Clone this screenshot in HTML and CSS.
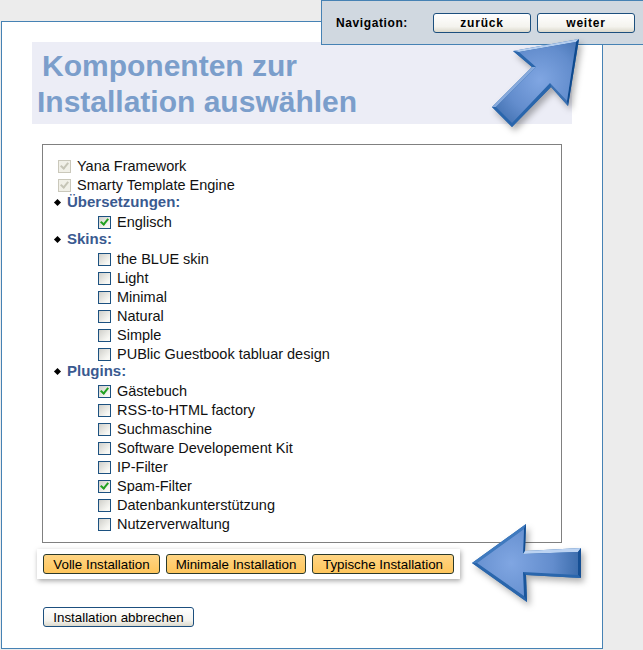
FILE: index.html
```html
<!DOCTYPE html>
<html lang="de">
<head>
<meta charset="utf-8">
<title>Komponenten zur Installation auswählen</title>
<link rel="stylesheet" href="styles.css">
</head>
<body>
<nav class="nav">
  <span class="nav-label">Navigation:</span>
  <div class="nav-buttons">
    <button class="btn btn-nav">zurück</button>
    <button class="btn btn-nav">weiter</button>
  </div>
</nav>
<main class="page">
  <h1 class="title">Komponenten zur<br><span class="title-second">Installation auswählen</span></h1>
  <section class="list">
    <label class="row"><input type="checkbox" class="check check-off" checked disabled>Yana Framework</label>
    <label class="row"><input type="checkbox" class="check check-off" checked disabled>Smarty Template Engine</label>
    <h2 class="group">Übersetzungen:</h2>
    <label class="row row-sub"><input type="checkbox" class="check" checked>Englisch</label>
    <h2 class="group">Skins:</h2>
    <label class="row row-sub"><input type="checkbox" class="check">the BLUE skin</label>
    <label class="row row-sub"><input type="checkbox" class="check">Light</label>
    <label class="row row-sub"><input type="checkbox" class="check">Minimal</label>
    <label class="row row-sub"><input type="checkbox" class="check">Natural</label>
    <label class="row row-sub"><input type="checkbox" class="check">Simple</label>
    <label class="row row-sub"><input type="checkbox" class="check">PUBlic Guestbook tabluar design</label>
    <h2 class="group">Plugins:</h2>
    <label class="row row-sub"><input type="checkbox" class="check" checked>Gästebuch</label>
    <label class="row row-sub"><input type="checkbox" class="check">RSS-to-HTML factory</label>
    <label class="row row-sub"><input type="checkbox" class="check">Suchmaschine</label>
    <label class="row row-sub"><input type="checkbox" class="check">Software Developement Kit</label>
    <label class="row row-sub"><input type="checkbox" class="check">IP-Filter</label>
    <label class="row row-sub"><input type="checkbox" class="check" checked>Spam-Filter</label>
    <label class="row row-sub"><input type="checkbox" class="check">Datenbankunterstützung</label>
    <label class="row row-sub"><input type="checkbox" class="check">Nutzerverwaltung</label>
  </section>
  <div class="presets">
    <button class="btn btn-orange btn-volle">Volle Installation</button>
    <button class="btn btn-orange btn-min">Minimale Installation</button>
    <button class="btn btn-orange btn-typ">Typische Installation</button>
  </div>
  <button class="btn btn-cancel">Installation abbrechen</button>
</main>

<svg class="arrow arrow-nav" width="110" height="105" viewBox="0 0 110 105" aria-hidden="true">
  <defs>
    <radialGradient id="faceA" gradientUnits="userSpaceOnUse" cx="60" cy="50" r="56">
      <stop offset="0" stop-color="#80a6e2"/>
      <stop offset="0.6" stop-color="#638dcd"/>
      <stop offset="1" stop-color="#4372b2"/>
    </radialGradient>
  </defs>
  <polygon points="99,9 33,21 52,37 12,77 32,97 71,57 88,76" fill="#2a66ac"/>
  <polygon points="33,21 99,9 96,12 39,22" fill="#b4cdee"/>
  <polygon points="99,9 88,76 87,71 96,12" fill="#0f4a8e"/>
  <polygon points="88,76 71,57 70,53 87,71" fill="#3a70b2"/>
  <polygon points="71,57 32,97 32,93 70,53" fill="#2a66ac"/>
  <polygon points="32,97 12,77 16,77 32,93" fill="#2a66ac"/>
  <polygon points="12,77 52,37 56,37 16,77" fill="#86a9dc"/>
  <polygon points="52,37 33,21 39,22 56,37" fill="#2a66ac"/>
  <polygon points="39,22 96,12 87,71 70,53 32,93 16,77 56,37" fill="url(#faceA)"/>
</svg>

<svg class="arrow arrow-presets" width="125" height="92" viewBox="0 0 125 92" aria-hidden="true">
  <defs>
    <radialGradient id="faceB" gradientUnits="userSpaceOnUse" cx="46" cy="45" r="70">
      <stop offset="0" stop-color="#80a6e2"/>
      <stop offset="0.6" stop-color="#638dcd"/>
      <stop offset="1" stop-color="#3a6bab"/>
    </radialGradient>
  </defs>
  <polygon points="7,45 61,6 60,33 116,30 116,60 61,57 62,84" fill="#2a66ac"/>
  <polygon points="7,45 61,6 59,11 12,45" fill="#3f7abf"/>
  <polygon points="61,6 60,33 58,36 59,11" fill="#124d92"/>
  <polygon points="60,33 116,30 113,34 58,36" fill="#bcd3f2"/>
  <polygon points="116,60 116,30 113,34 113,57" fill="#154f94"/>
  <polygon points="116,60 61,57 58,54 113,57" fill="#2a66ac"/>
  <polygon points="61,57 62,84 59,78 58,54" fill="#1a569c"/>
  <polygon points="62,84 7,45 12,45 59,78" fill="#2a66ac"/>
  <polygon points="12,45 59,11 58,36 113,34 113,57 58,54 59,78" fill="url(#faceB)"/>
</svg>
</body>
</html>
```
FILE: styles.css
```css
html, body {
  margin: 0;
  padding: 0;
  height: 650px;
  overflow: hidden;
}
body {
  background: #ececec;
  font-family: "Liberation Sans", Arial, sans-serif;
  font-size: 14.5px;
  color: #000;
  position: relative;
}
.page {
  box-sizing: border-box;
  width: 602px;
  height: 628px;
  margin: 21px 0 0 1px;
  padding: 20px 30px 0 40px;
  background: #fff;
  border: 1px solid #4682b4;
}
.title {
  box-sizing: border-box;
  width: 540px;
  height: 82px;
  margin: 0 0 20px -10px;
  padding: 6px 0 0 10px;
  background: #ecedf6;
  color: #7b9ecb;
  font-size: 30px;
  font-weight: bold;
  line-height: 36px;
}
.title-second {
  margin-left: -5px;
}
.list {
  box-sizing: border-box;
  width: 520px;
  height: 399px;
  padding: 12px 0 0 15px;
  border: 1px solid #808080;
}
.row {
  display: flex;
  align-items: center;
  height: 19px;
  line-height: 19px;
  color: #111;
}
.row-sub {
  padding-left: 40px;
}
.group {
  position: relative;
  height: 18px;
  margin: 0;
  padding-left: 9px;
  color: #3a5a90;
  font-size: 15px;
  font-weight: bold;
  line-height: 13px;
}
.group::before {
  content: "";
  position: absolute;
  left: -3px;
  top: 5px;
  width: 5px;
  height: 5px;
  background: #000;
  transform: rotate(45deg);
}
.check {
  appearance: none;
  -webkit-appearance: none;
  position: relative;
  flex: none;
  box-sizing: border-box;
  width: 13px;
  height: 13px;
  margin: 0 6px 0 0;
  background: linear-gradient(135deg, #cfcfca, #f8f8f4 80%);
  border: 1px solid #1c5180;
}
.check:checked::after {
  content: "";
  position: absolute;
  left: 3px;
  top: 0;
  width: 3px;
  height: 6px;
  border: solid #21a121;
  border-width: 0 2px 2px 0;
  transform: rotate(40deg);
}
.check-off {
  background: #f1f0e8;
  border-color: #cac8bb;
}
.check-off:checked::after {
  border-color: #c6c5b7;
}
.btn {
  box-sizing: border-box;
  height: 20px;
  padding: 0;
  border: 1px solid #1c4f7e;
  border-radius: 3px;
  background: linear-gradient(#fff, #f4f3ee 70%, #dcd9cc);
  color: #000;
  font-family: "Liberation Sans", Arial, sans-serif;
  font-size: 13.33px;
  line-height: 17px;
}
.btn-orange {
  background: linear-gradient(#ffd584, #ffc65c);
  border-color: #2b3a2b;
}
.btn-volle { width: 117px; }
.btn-min { width: 140px; }
.btn-typ { width: 142px; }
.presets {
  box-sizing: border-box;
  display: flex;
  gap: 6px;
  width: 423px;
  height: 30px;
  margin: 6px 0 28px -5px;
  padding: 5px 0 0 6px;
  background: #fff;
  box-shadow: 1px 2px 5px rgba(0, 0, 0, 0.35);
}
.btn-cancel {
  display: block;
  width: 151px;
  margin-left: 1px;
}
.nav {
  box-sizing: border-box;
  position: fixed;
  top: 0;
  left: 321px;
  right: -1px;
  height: 45px;
  display: flex;
  justify-content: space-between;
  padding: 13px 8px 0 14px;
  background: #d0d8e0;
  border: 1px solid #4682b4;
}
.nav-label {
  font-size: 12px;
  font-weight: bold;
  letter-spacing: 0.6px;
  line-height: 18px;
}
.nav-buttons {
  display: flex;
  gap: 6px;
  margin-top: -1px;
}
.btn-nav {
  width: 98px;
  font-size: 12px;
  font-weight: bold;
  letter-spacing: 0.8px;
}
.arrow {
  position: absolute;
  filter: drop-shadow(3px 4px 3px rgba(0, 0, 0, 0.3));
}
.arrow-nav {
  left: 480px;
  top: 30px;
}
.arrow-presets {
  left: 465px;
  top: 518px;
}
```
